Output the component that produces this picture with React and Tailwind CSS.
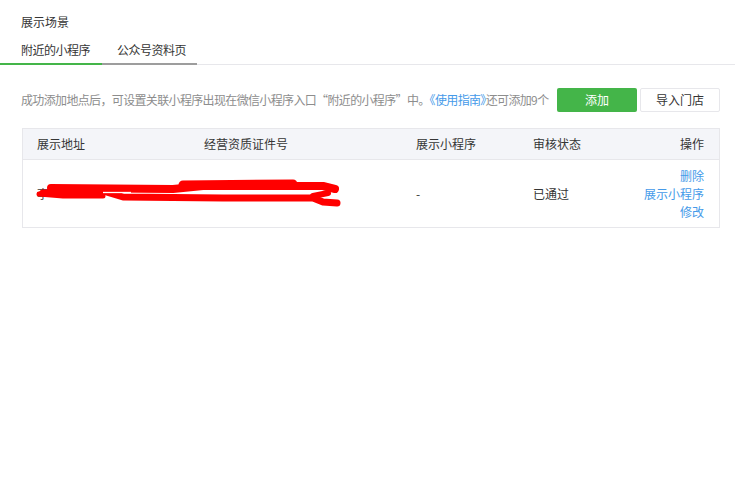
export default function App() {
  const font = { fontFamily: '"Noto Sans CJK SC", "Noto Sans", sans-serif' };

  return (
    <div className="w-[735px] h-[500px] bg-white text-[12px] text-[#353535]" style={font}>
      <div className="pl-[21px] pt-[13px] h-[32px] leading-[18px]">展示场景</div>

      {/* tabs */}
      <div className="flex border-b border-[#e7e7eb] h-[33px]">
        <div className="w-[102px] pl-[21px] pt-[9px] leading-[18px] tracking-[-0.5px] border-b-2 border-[#44b549] -mb-px">
          附近的小程序
        </div>
        <div className="w-[95px] pl-[15px] pt-[9px] leading-[18px] tracking-[-0.5px] border-b-2 border-[#9d9d9d] -mb-px">
          公众号资料页
        </div>
      </div>

      {/* info row */}
      <div className="flex items-center pl-[21px] pr-[15px] mt-[23px] h-[24px]">
        <div className="flex-1 min-w-0 text-[#8d8d8d] whitespace-nowrap tracking-[-0.65px]">
          成功添加地点后，可设置关联小程序出现在微信小程序入口“附近的小程序”中。
          <span className="text-[#459ae9]">《使用指南》</span>
          <span className="-ml-[6px]">还可添加9个</span>
        </div>
        <div className="flex shrink-0 gap-[3px]">
          <button className="w-[80px] h-[24px] bg-[#44b549] text-white rounded-[2px] leading-[24px]">
            添加
          </button>
          <button className="w-[80px] h-[24px] bg-white border border-[#e7e7eb] rounded-[2px] text-[#353535]">
            导入门店
          </button>
        </div>
      </div>

      {/* table */}
      <div className="mx-[22px] w-[698px] mt-[16px] border border-[#e7e7eb]">
        <div className="grid grid-cols-[167px_212px_117px_1fr_auto] h-[31px] items-center bg-[#f4f5f9] border-b border-[#e7e7eb]">
          <div className="pl-[14px]">展示地址</div>
          <div className="pl-[14px]">经营资质证件号</div>
          <div className="pl-[14px]">展示小程序</div>
          <div className="pl-[14px]">审核状态</div>
          <div className="pr-[15px] text-right">操作</div>
        </div>
        <div className="relative grid grid-cols-[167px_212px_117px_1fr_auto] h-[67px] items-center">
          <div className="pl-[14px] whitespace-nowrap">李</div>
          <div className="pl-[14px]"></div>
          <div className="pl-[14px]">-</div>
          <div className="pl-[14px]">已通过</div>
          <div className="pr-[15px] text-right text-[#459ae9] leading-[18px]">
            <div>删除</div>
            <div>展示小程序</div>
            <div>修改</div>
          </div>
          <svg
            className="absolute left-0 top-0 pointer-events-none"
            width="340"
            height="67"
            viewBox="0 0 340 67"
          >
            <g fill="none" stroke="#ff0000" strokeLinecap="round" strokeLinejoin="round">
              <path d="M28 28 L150 29 L180 26 L300 26 L312 29" strokeWidth="8" />
              <path d="M160 25 L270 24" strokeWidth="9" />
              <path d="M20 33 L80 31 L100 37 L200 38 L290 38 L300 42 L314 43" strokeWidth="7" />
              <path d="M16 34 L40 36 L80 36" strokeWidth="5" />
              <path d="M290 36 L305 33" strokeWidth="6" />
            </g>
            <path d="M80 32.5 L108 32.5" stroke="#ffffff" strokeWidth="1.3" />
            <path d="M185 32 L285 32" stroke="#ffffff" strokeWidth="1.3" strokeDasharray="2 1" />
          </svg>
        </div>
      </div>
    </div>
  );
}
